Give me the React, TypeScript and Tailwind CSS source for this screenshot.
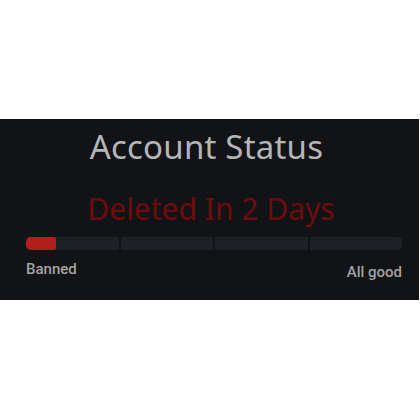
export default function App() {
  return (
    <div className="w-[420px] h-[420px] bg-white pt-[119px]" style={{ fontFamily: '"Noto Sans", sans-serif' }}>
      <div className="w-[419px] h-[181px] bg-[#121316] flex flex-col items-center pt-[6px]">
        <div className="text-[33px] leading-[44px] text-[#b5b5b5] tracking-[0.2px] -ml-[6px]">Account Status</div>
        <div className="mt-[20px] text-[30px] leading-[40px] text-[#6e0b0b] ml-[3px]">Deleted In 2 Days</div>
        <div className="mt-[8px] w-full pl-[26px] pr-[17px] flex gap-[2px] h-[13px]">
          <div className="flex-1 bg-[#1e2025] rounded-l-[4px] flex">
            <div className="w-[30px] h-full bg-[#b01f1b] rounded-l-[5px] rounded-r-[2px]" />
          </div>
          <div className="flex-1 bg-[#1e2025]" />
          <div className="flex-1 bg-[#1e2025]" />
          <div className="flex-1 bg-[#1e2025] rounded-r-[4px]" />
        </div>
        <div className="w-full pl-[26px] pr-[17px] mt-[9px] flex justify-between text-[15px] leading-[20px] font-medium text-[#a3a3a3]" style={{ fontFamily: 'Roboto, sans-serif' }}>
          <span>Banned</span>
          <span className="pt-[3px]">All good</span>
        </div>
      </div>
    </div>
  );
}
